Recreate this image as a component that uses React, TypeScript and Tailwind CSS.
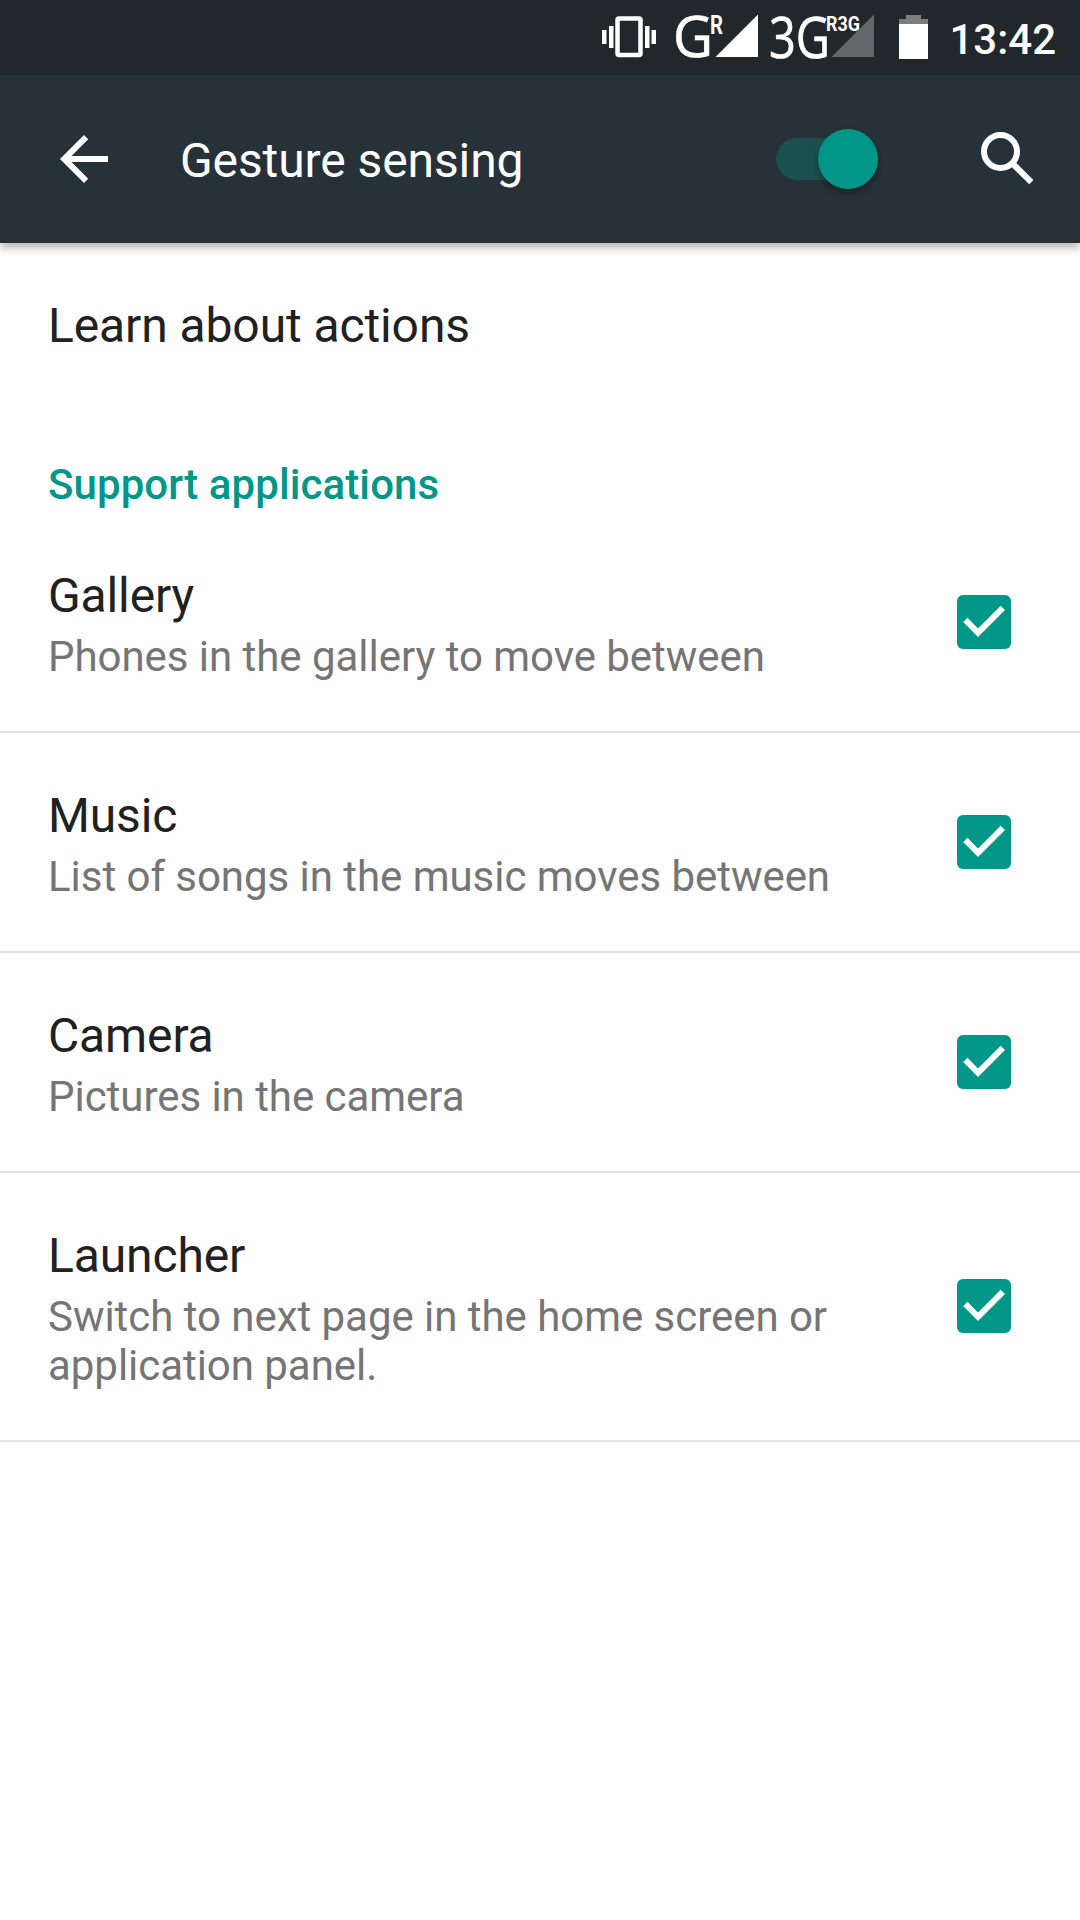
import { useState } from 'react'
import clsx from 'clsx'

const APPS = [
  { name: 'Gallery', summary: 'Phones in the gallery to move between' },
  { name: 'Music', summary: 'List of songs in the music moves between' },
  { name: 'Camera', summary: 'Pictures in the camera' },
  { name: 'Launcher', summary: 'Switch to next page in the home screen or application panel.' },
]

function StatusIcons() {
  return (
    <svg width="340" height="75" viewBox="600 0 340 75" fill="#fff">
      {/* vibrate */}
      <rect x="602" y="30" width="4.5" height="14" />
      <rect x="609" y="26" width="4.5" height="22" />
      <rect x="617.5" y="18.5" width="23" height="36.5" rx="1.5" fill="none" stroke="#fff" strokeWidth="4.5" />
      <rect x="645" y="26" width="4.5" height="22" />
      <rect x="651.5" y="30" width="4.5" height="14" />

      {/* sim 1 */}
      <g fontFamily="Open Sans, sans-serif" fontSize="56" stroke="#fff" strokeWidth="0.7">
        <text x="673" y="57.3" textLength="40" lengthAdjust="spacingAndGlyphs">
          G
        </text>
        <text x="769" y="58" textLength="61" lengthAdjust="spacingAndGlyphs">
          3G
        </text>
      </g>
      <path d="M758 14.5V57H715.5z" />

      {/* sim 2 */}
      <path d="M874 14.5V57H831.5z" fill="#636769" />
      <g fontFamily="Roboto, sans-serif" fontWeight="700">
        <text x="710" y="34" fontSize="26" textLength="13" lengthAdjust="spacingAndGlyphs">
          R
        </text>
        <text x="826" y="30.5" fontSize="20" textLength="34" lengthAdjust="spacingAndGlyphs">
          R3G
        </text>
      </g>

      {/* battery */}
      <path d="M906 15h15v4h7v5h-29v-5h7z" fill="#7a7d80" />
      <rect x="899" y="24" width="29" height="35" />
    </svg>
  )
}

function BackIcon() {
  return (
    <svg width="72" height="72" viewBox="0 0 24 24" fill="#fff" className="shrink-0">
      <path d="M20 11H7.83l5.59-5.59L12 4l-8 8 8 8 1.41-1.41L7.83 13H20v-2z" />
    </svg>
  )
}

function SearchIcon() {
  return (
    <svg width="54" height="54" viewBox="981 132 54 54" fill="none" stroke="#fff" strokeWidth="6">
      <circle cx="1000.5" cy="151.5" r="16.5" />
      <path d="M1014 165L1031.3 182.2" />
      <path d="M1012 163L1017 168" strokeWidth="3" />
    </svg>
  )
}

function Switch({ on, onChange }: { on: boolean; onChange: () => void }) {
  return (
    <button role="switch" aria-checked={on} onClick={onChange} className="flex h-[60px] w-[102px] items-center">
      <span className={clsx('h-[42px] w-[92px] rounded-full', on ? 'bg-[#1b504f]' : 'bg-[#4a5459]')} />
      <span
        className={clsx(
          'h-[60px] w-[60px] shrink-0 rounded-full shadow-[0_4px_6px_rgba(0,0,0,0.3)]',
          on ? '-ml-[50px] bg-[#009587]' : '-ml-[92px] bg-[#ececec]',
        )}
      />
    </button>
  )
}

function Checkbox({ checked }: { checked: boolean }) {
  return (
    <span
      className={clsx(
        'block h-[54px] w-[54px] shrink-0 rounded-[6px]',
        checked ? 'bg-[#009688]' : 'border-[6px] border-[#757575]',
      )}
    >
      {checked && (
        <svg width="54" height="54" viewBox="0 0 54 54" fill="#fff">
          <path d="M6.2 27l4.3-4.2L21 33.4 43.6 10.8l4.4 4.3L21 42z" />
        </svg>
      )}
    </span>
  )
}

export default function App() {
  const [enabled, setEnabled] = useState(true)
  const [off, setOff] = useState<string[]>([])

  const toggle = (name: string) =>
    setOff((prev) => (prev.includes(name) ? prev.filter((n) => n !== name) : [...prev, name]))

  return (
    <div className="h-[1920px] w-[1080px] overflow-hidden bg-[#fefefe] font-['Roboto',sans-serif] text-[#212121]">
      <div className="flex h-[75px] justify-end bg-[#22272b] pr-[24px] text-white">
        <StatusIcons />
        <span className="ml-[9px] mt-[15px] text-[42px] leading-[50px] font-medium">13:42</span>
      </div>

      <header className="flex h-[168px] items-center bg-[#263238] pr-[45px] pl-[48px] text-white shadow-[0_5px_8px_rgba(0,0,0,0.27)]">
        <BackIcon />
        <h1 className="ml-[60px] flex-1 pt-[3px] text-[48px] leading-[56px] tracking-[-0.1px] whitespace-nowrap">
          Gesture sensing
        </h1>
        <Switch on={enabled} onChange={() => setEnabled(!enabled)} />
        <button className="ml-[103px]">
          <SearchIcon />
        </button>
      </header>

      <main>
        <div className="flex h-[168px] items-center px-[48px] pb-[2px] text-[48px] tracking-[-0.1px]">
          Learn about actions
        </div>
        <h2 className="h-[102px] px-[48px] pt-[49px] text-[42px] leading-[49px] font-medium tracking-[0.09px] text-[#009688]">
          Support applications
        </h2>

        <ul>
          {APPS.map((app) => (
            <li
              key={app.name}
              onClick={() => toggle(app.name)}
              className="flex items-center border-b-2 border-[#e0e0e0] pt-[55px] pr-[69px] pb-[50px] pl-[48px]"
            >
              <div className="w-[860px] shrink-0">
                <div className="text-[48px] leading-[56px] tracking-[-0.13px]">{app.name}</div>
                <p className="mt-[8px] text-[42px] leading-[49px] tracking-[-0.04px] text-[#757575]">{app.summary}</p>
              </div>
              <div className="mb-[6px] ml-auto">
                <Checkbox checked={!off.includes(app.name)} />
              </div>
            </li>
          ))}
        </ul>
      </main>
    </div>
  )
}
